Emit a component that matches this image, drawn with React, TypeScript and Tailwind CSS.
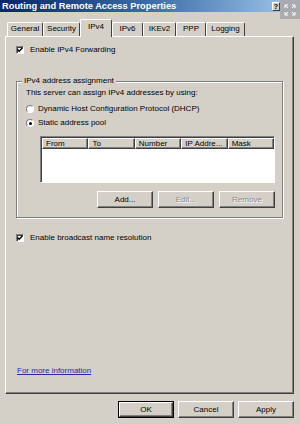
import React from "react";

const raised =
  "border border-t-white border-l-white border-r-[#404040] border-b-[#404040] shadow-[inset_-1px_-1px_0_#808080]";

function Check() {
  return (
    <div className="w-[8px] h-[8px] bg-white border border-t-[#808080] border-l-[#808080] border-r-white border-b-white shadow-[inset_1px_1px_0_#404040] flex items-center justify-center">
      <svg width="6" height="6" viewBox="0 0 6 6">
        <path d="M0.5 2.5 L2.2 4.3 L5.5 0.8" stroke="#000" strokeWidth="1.4" fill="none" />
      </svg>
    </div>
  );
}

function Radio({ on }: { on?: boolean }) {
  return (
    <div className="w-[8px] h-[8px] rounded-full bg-white border border-t-[#808080] border-l-[#808080] border-r-white border-b-white flex items-center justify-center">
      {on && <div className="w-[3px] h-[3px] rounded-full bg-black" />}
    </div>
  );
}

function Btn({
  label,
  disabled,
  def,
}: {
  label: string;
  disabled?: boolean;
  def?: boolean;
}) {
  return (
    <div
      className={
        "w-[56px] h-[17px] flex items-center justify-center " +
        (def ? "border border-black " : "")
      }
    >
      <div
        className={
          "w-full h-full flex items-center justify-center bg-[#d4d0c8] " +
          raised +
          (disabled ? " text-[#8a8a8a] [text-shadow:1px_1px_0_#ffffff]" : " text-black")
        }
      >
        {label}
      </div>
    </div>
  );
}

function Tab({ label, w, sel }: { label: string; w: number; sel?: boolean }) {
  return (
    <div
      style={{ width: w }}
      className={
        "flex items-start justify-center bg-[#d4d0c8] border-t border-l border-r border-t-white border-l-white border-r-[#404040] rounded-t-[2px] " +
        (sel ? "h-[18px] pt-[2px] relative z-10 -mb-[1px]" : "h-[14px] pt-[1px]")
      }
    >
      {label}
    </div>
  );
}

export default function App() {
  return (
    <div
      className="w-[300px] h-[424px] bg-[#d4d0c8] relative overflow-hidden text-[8px] leading-[10px] text-black"
      style={{ fontFamily: '"Liberation Sans", Arial, sans-serif' }}
    >
      {/* title bar */}
      <div className="h-[12px] bg-gradient-to-r from-[#0a246a] via-[#3a6ea5] to-[#a6caf0] flex items-center pl-[2px]">
        <span className="text-white font-bold text-[9.3px]">
          Routing and Remote Access Properties
        </span>
        <div className="ml-auto mr-[20px] w-[8px] h-[9px] bg-[#d4d0c8] border border-t-white border-l-white border-r-[#404040] border-b-[#404040] flex items-center justify-center text-[7px] font-bold leading-none">
          ?
        </div>
      </div>

      {/* overlay expand box */}
      <div className="absolute right-0 top-0 w-[20px] h-[19px] bg-[#a8a8a8]/90 flex items-center justify-center">
        <svg width="12" height="12" viewBox="0 0 12 12" stroke="#fff" strokeWidth="1" fill="none">
          <path d="M1 4V1h3M1 1l3 3" />
          <path d="M11 4V1H8M11 1L8 4" />
          <path d="M1 8v3h3M1 11l3-3" />
          <path d="M11 8v3H8M11 11L8 8" />
        </svg>
      </div>

      {/* tabs */}
      <div className="h-[24px] flex items-end pl-[7px]">
        <Tab label="General" w={36} />
        <Tab label="Security" w={37} />
        <Tab label="IPv4" w={32} sel />
        <Tab label="IPv6" w={31} />
        <Tab label="IKEv2" w={33} />
        <Tab label="PPP" w={30} />
        <Tab label="Logging" w={39} />
      </div>

      {/* panel */}
      <div className="ml-[5px] w-[289px] h-[358px] border border-t-white border-l-white border-r-[#404040] border-b-[#404040] shadow-[inset_-1px_-1px_0_#808080] flex flex-col pl-[10px]">
        <div className="mt-[8px] flex items-center gap-[6px] h-[9px]">
          <Check />
          <span>Enable IPv4 Forwarding</span>
        </div>

        {/* group box */}
        <div className="relative mt-[27px] w-[267px] h-[137px] border border-[#808080] shadow-[inset_1px_1px_0_#ffffff,1px_1px_0_#ffffff] flex flex-col pl-[9px]">
          <span className="absolute -top-[6px] left-[5px] bg-[#d4d0c8] px-[2px]">
            IPv4 address assignment
          </span>
          <div className="mt-[6px] h-[10px]">This server can assign IPv4 addresses by using:</div>
          <div className="mt-[6px] h-[10px] flex items-center gap-[4px]">
            <Radio />
            <span>Dynamic Host Configuration Protocol (DHCP)</span>
          </div>
          <div className="mt-[4px] h-[10px] flex items-center gap-[4px]">
            <Radio on />
            <span>Static address pool</span>
          </div>

          {/* list */}
          <div className="mt-[8px] ml-[14px] w-[235px] h-[47px] bg-white border border-t-[#808080] border-l-[#808080] border-r-white border-b-white shadow-[inset_1px_1px_0_#404040] pl-[1px] pt-[1px]">
            <div className="flex h-[11px]">
              {["From", "To", "Number", "IP Addre...", "Mask"].map((c) => (
                <div
                  key={c}
                  className={"w-[47px] h-[11px] bg-[#d4d0c8] pl-[3px] flex items-center " + raised}
                >
                  {c}
                </div>
              ))}
            </div>
          </div>

          <div className="mt-[8px] ml-[71px] flex gap-[5px]">
            <Btn label="Add..." />
            <Btn label="Edit..." disabled />
            <Btn label="Remove" disabled />
          </div>
        </div>

        <div className="mt-[15px] flex items-center gap-[6px] h-[9px]">
          <Check />
          <span>Enable broadcast name resolution</span>
        </div>

        <div className="mt-[124px] ml-[1px]">
          <span className="text-[#2a2aa8] underline">For more information</span>
        </div>
      </div>

      {/* bottom buttons */}
      <div className="mt-[7px] flex justify-end gap-[4px] pr-[6px]">
        <Btn label="OK" def />
        <Btn label="Cancel" />
        <Btn label="Apply" />
      </div>
    </div>
  );
}
